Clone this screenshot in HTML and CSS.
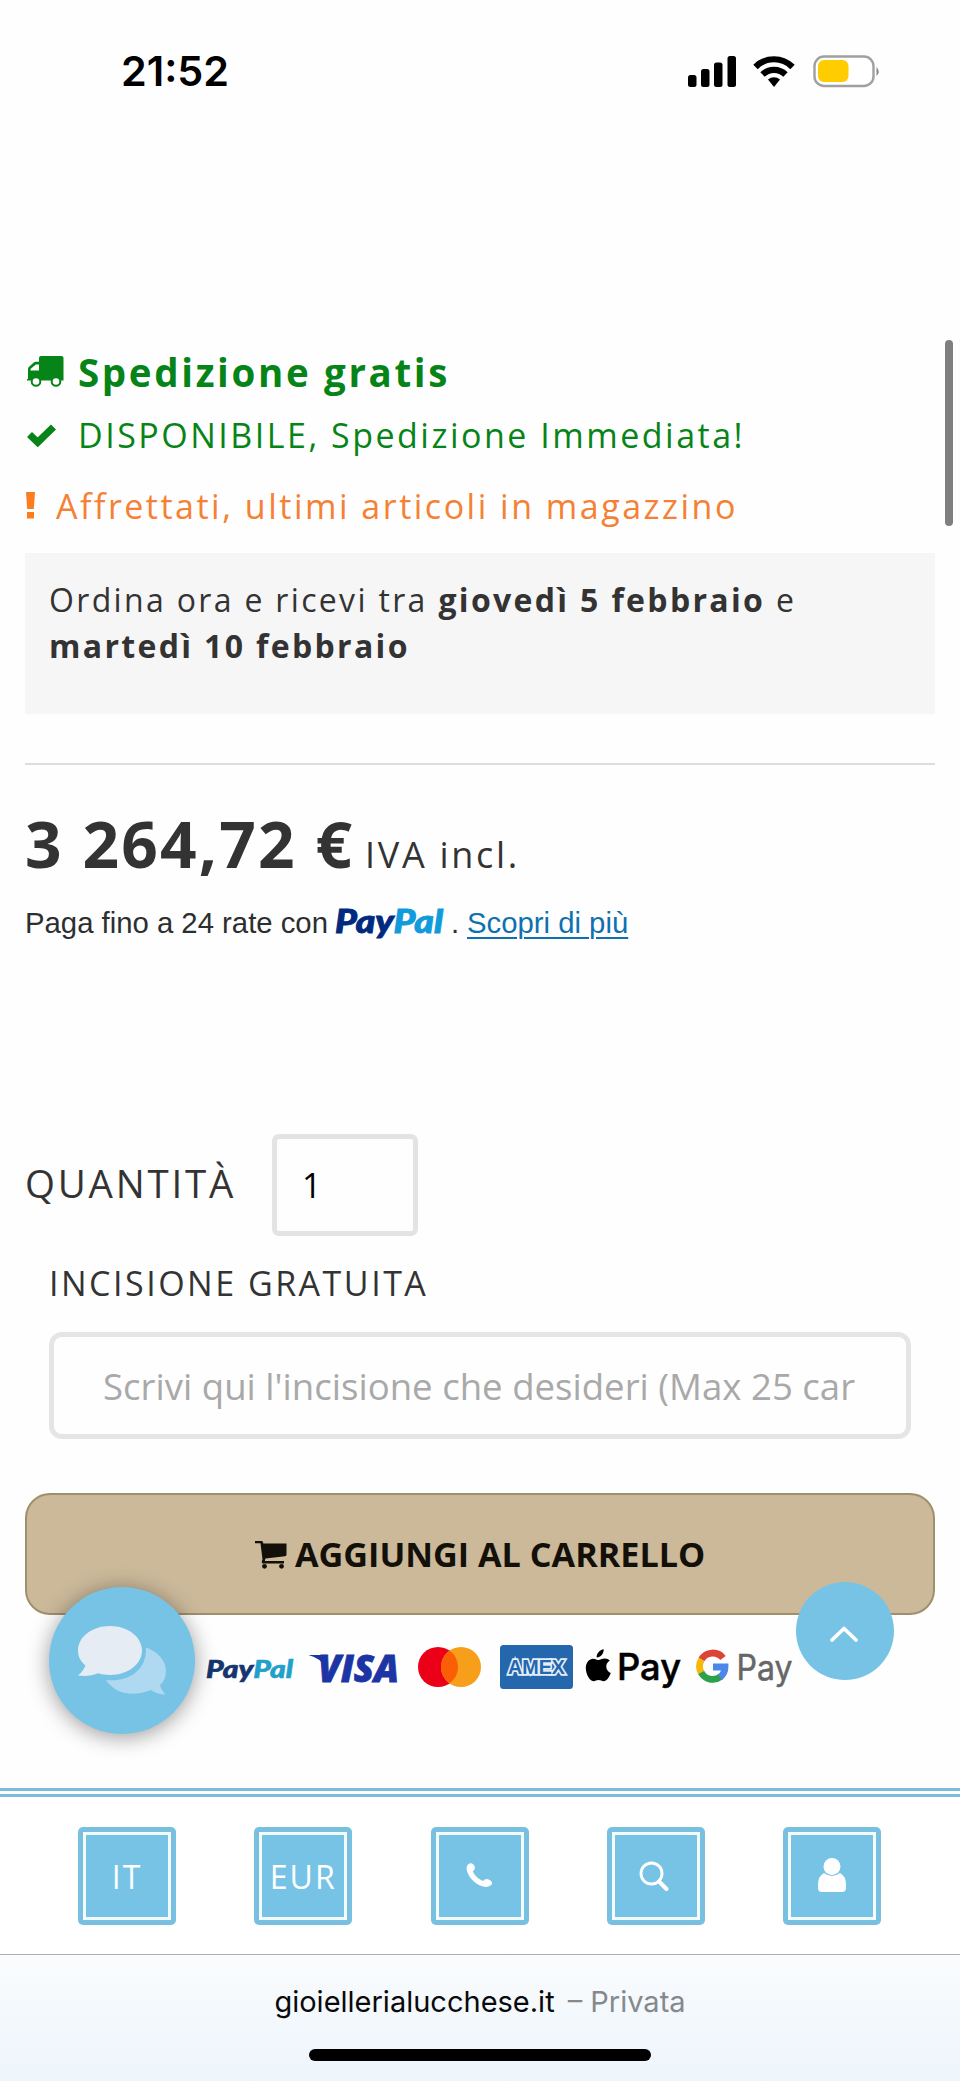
FILE: index.html
```html
<!DOCTYPE html>
<html lang="it">
<head>
<meta charset="utf-8">
<title>Gioielleria Lucchese</title>
<link rel="stylesheet" href="styles.css">
</head>
<body>
<div class="screen">
  <header class="status">
    <span class="clock">21:52</span>
    <svg class="status-icons" width="194" height="34" viewBox="0 0 194 34">
      <g fill="#000">
        <rect x="1" y="21" width="8.500" height="12" rx="2.500"/>
        <rect x="14" y="15" width="8.500" height="18" rx="2.500"/>
        <rect x="27" y="8.500" width="8.500" height="24.500" rx="2.500"/>
        <rect x="40.500" y="2" width="8.500" height="31" rx="2.500"/>
        <path d="M87 33l-6-7.500a9.500 9.500 0 0 1 12 0z"/>
      </g>
      <g fill="none" stroke="#000" stroke-width="6.200">
        <path d="M68.500 13a26 26 0 0 1 37 0"/>
        <path d="M75.500 20.500a16.500 16.500 0 0 1 23 0"/>
      </g>
      <rect x="127.500" y="2.500" width="59" height="29.500" rx="9.500" fill="#fff" stroke="#a0a0a0" stroke-width="2.400"/>
      <rect x="131" y="6" width="30.500" height="22" rx="6" fill="#fc0"/>
      <path d="M189.500 13q4.500 4.500 0 9z" fill="#888"/>
    </svg>
  </header>

  <main class="product">
    <div class="line free">
      <svg class="ico-truck" width="38" height="32" viewBox="0 0 38 32">
        <path fill="#078418" fill-rule="evenodd" d="M15 1h20.500q2 0 2 2v22.500H1V24h1V14q0-1 .8-2l5-4.500q.8-.7 2-.7H13V3q0-2 2-2zM13 9.500h-3.200L4.500 14v1.500H13z"/>
        <circle cx="10" cy="26.500" r="4.300" fill="#fefefe" stroke="#078418" stroke-width="2"/>
        <circle cx="30" cy="26.500" r="4.300" fill="#fefefe" stroke="#078418" stroke-width="2"/>
      </svg>
      <span>Spedizione gratis</span>
    </div>
    <div class="line stock">
      <svg class="ico-check" width="32" height="24" viewBox="0 0 32 24"><path d="M3.500 11.500l8.200 7.800L27.500 4" fill="none" stroke="#078418" stroke-width="7.200" stroke-linejoin="miter"/></svg>
      <span>DISPONIBILE, Spedizione Immediata!</span>
    </div>
    <div class="line hurry">
      <svg class="ico-bang" width="9" height="28" viewBox="0 0 9 28"><path fill="#fb7d1d" d="M0 1h9l-1.200 17H1.200zM1 21h7v6.500H1z"/></svg>
      <span>Affrettati, ultimi articoli in magazzino</span>
    </div>

    <p class="delivery">Ordina ora e ricevi tra <b>giovedì 5 febbraio</b> e<br><b>martedì 10 febbraio</b></p>

    <hr class="rule">

    <div class="price"><strong>3 264,72 €</strong><span>IVA incl.</span></div>
    <div class="rates">
      <span class="rates-text">Paga fino a 24 rate con</span>
      <svg class="paypal" width="112" height="60" viewBox="0 -10 112 60"><text x="1" y="29.500" textLength="108" lengthAdjust="spacingAndGlyphs" class="pp"><tspan class="pp-dark">Pay</tspan><tspan class="pp-light">Pal</tspan></text></svg>
      <span class="dot">.</span>
      <a class="more">Scopri di più</a>
    </div>

    <div class="qty"><label>QUANTITÀ</label><div class="qty-box">1</div></div>
    <div class="engrave-label">INCISIONE GRATUITA</div>
    <div class="engrave-box">Scrivi qui l'incisione che desideri (Max 25 car</div>

    <div class="cart">
      <svg class="ico-cart" width="34" height="30" viewBox="0 0 34 30">
        <path fill="#13100a" d="M1 1h6.500q1.200 0 1.500 1.200L9.300 3.500H32.500V14.500q0 1.500-1.500 1.700L11.500 18.500q-.8 1.500-.5 2.500H30v2.400H8.500q-1.500-1.200 0-4L6.500 3.200H1z"/>
        <circle cx="10.500" cy="26.300" r="2.400" fill="#13100a"/><circle cx="27.500" cy="26.300" r="2.400" fill="#13100a"/>
      </svg>
      <span>AGGIUNGI AL CARRELLO</span>
    </div>

    <svg class="payments" width="600" height="60" viewBox="196 1637 600 60">
      <text x="206" y="1678" textLength="87" lengthAdjust="spacingAndGlyphs" class="pp-small"><tspan class="pps-dark">Pay</tspan><tspan class="pps-light">Pal</tspan></text>
      <text x="318" y="1682" textLength="81" lengthAdjust="spacingAndGlyphs" class="visa">VISA</text>
      <path d="M308.500 1655h13l3 12q-4-9-16-12z" fill="#1c34a4"/>
      <circle cx="438" cy="1667" r="20" fill="#eb0018"/>
      <circle cx="461" cy="1667" r="20" fill="#f79e1b"/>
      <path d="M449.500 1650.600a20 20 0 0 1 0 32.800a20 20 0 0 1 0-32.800z" fill="#fb5f05"/>
      <rect x="500" y="1645" width="73" height="44" rx="3.500" fill="#2467ac"/>
      <text x="508" y="1674" textLength="57" lengthAdjust="spacingAndGlyphs" class="amex">AMEX</text>
      <path transform="translate(585.500 1649)" d="M18.200.2c.3 4.300-3.300 8.300-7 8.200C10.800 4.600 14.200.8 18.200.2zM24.300 11.600c-5.300 3.300-4.300 10.400 1 12.400-1.600 4.300-4.200 8.200-7.200 8.200-2 0-2.700-1.100-5-1.100s-3.100 1.100-5.100 1.100C4.100 32.200.3 24.600.3 19c0-5.600 3.500-9.300 7.300-9.300 2.300 0 4.100 1.400 5.600 1.400 1.400 0 3.400-1.600 6.200-1.500 2 .1 3.700.8 4.900 2z" fill="#000"/>
      <text x="617" y="1680" textLength="64" lengthAdjust="spacingAndGlyphs" class="apay">Pay</text>
      <g fill="none" stroke-width="6.800">
        <path d="M723 1658a13 13 0 0 0-21.500 1.500" stroke="#dc4437"/>
        <path d="M701.500 1659.500a13.500 13.500 0 0 0 .2 14" stroke="#f5b80c"/>
        <path d="M701.200 1672.500a13 13 0 0 0 19.300 4.300" stroke="#2ba14b"/>
        <path d="M713 1667h12a13 13 0 0 1-5 10.200" stroke="#4c86ea"/>
      </g>
      <text x="736.500" y="1680" textLength="56" lengthAdjust="spacingAndGlyphs" class="gpay">Pay</text>
    </svg>
  </main>

  <nav class="nav">
    <div class="tile"><div class="tile-in">IT</div></div>
    <div class="tile"><div class="tile-in">EUR</div></div>
    <div class="tile"><div class="tile-in"><svg width="28" height="28" viewBox="0 0 28 28"><path fill="#fff" d="M2 2.500C4 .5 7 .8 8.500 4c1 2.500 0 4-1.700 5.200 1.700 4.300 5.500 8 10.500 9.800 1.300-2 3.500-2.800 6-1.200 3.500 2 3.500 4.200 1.200 5.800-2.500 1.700-6.500 1.800-10.500 0C7.500 20.500 2.500 14.500 1 9 .2 6 .5 4 2 2.500z"/></svg></div></div>
    <div class="tile"><div class="tile-in"><svg class="ico-search" width="32" height="32" viewBox="0 0 32 32"><circle cx="13.500" cy="13.500" r="10.500" fill="none" stroke="#fff" stroke-width="2.900"/><path d="M21 21.500l7.500 7.500" stroke="#fff" stroke-width="4" stroke-linecap="round"/></svg></div></div>
    <div class="tile"><div class="tile-in"><svg class="ico-user" width="30" height="36" viewBox="0 0 30 36"><circle cx="15" cy="9.500" r="8.500" fill="#fff"/><path fill="#fff" d="M7 16q8 6 16 0 6 3 6 12v3q0 4-4 4H5q-4 0-4-4v-3q0-9 6-12z"/></svg></div></div>
  </nav>

  <footer class="browser">
    <div class="url"><span class="host">gioiellerialucchese.it</span><span class="mode">– Privata</span></div>
    <div class="home"></div>
  </footer>

  <div class="scrollbar"></div>
  <div class="chat">
    <svg width="92" height="72" viewBox="0 0 92 72">
      <path fill="#afd9f1" d="M69 22.500c14 5 22 16 19.500 28-1 4-2.500 7-5.500 9.500 1 4 3 7 5.500 9.500-6 0-11-2-14.500-4.500C58 72 38 69.500 29 55c20 2.500 41-8 40-32.500z"/>
      <path fill="#e6ecf3" d="M33 1C51 1 65 12 65 25.500S51 50 33 50c-4.500 0-8-.5-12-1.700C16.500 50.500 8 51.500 1 50.500 4.500 47.500 7 44 8.500 40.500 3.500 36.500 1 31.500 1 25.500 1 12 15 1 33 1z"/>
    </svg>
  </div>
  <div class="to-top"><svg width="30" height="20" viewBox="0 0 30 20"><path d="M3 16L15 4.500 27 16" fill="none" stroke="#fff" stroke-width="3.800" stroke-linecap="round" stroke-linejoin="round"/></svg></div>
</div>
</body>
</html>
```

FILE: styles.css
```css
* { box-sizing: border-box; }
body { margin: 0; background: #fff; }
.screen {
  position: relative;
  width: 960px;
  height: 2081px;
  overflow: hidden;
  background: #fefefe;
  font-family: "Open Sans", "Noto Sans", sans-serif;
  color: #333;
  display: flex;
  flex-direction: column;
  white-space: nowrap;
}
.status {
  height: 342px;
  flex: none;
  display: flex;
  align-items: flex-start;
  justify-content: space-between;
  padding: 54px 79px 0 121px;
}
.clock { font: 600 41.3px/35px Inter, sans-serif; color: #000; }
.product { height: 1446px; flex: none; padding: 0 25px; display: flex; flex-direction: column; }
.line { display: flex; align-items: center; flex: none; }
.free { height: 60px; font-size: 38.5px; font-weight: 700; color: #078418; letter-spacing: 2.65px; }
.ico-truck { margin: 0 14px 2px 1px; }
.stock { height: 65px; font-size: 34px; color: #078418; letter-spacing: 2.5px; }
.ico-check { margin: 0 20px 0 1px; }
.hurry { height: 77px; font-size: 34px; color: #f58134; letter-spacing: 2.5px; }
.ico-bang { margin: 0 21px 2px 1px; }
.delivery {
  margin: 9px 0 0;
  height: 161px;
  flex: none;
  padding: 24px 24px 0;
  background: #f6f6f6;
  font-size: 32px;
  line-height: 46px;
  letter-spacing: 2.33px;
}
.rule { width: 100%; height: 2px; flex: none; margin: 49px 0 28px; border: 0; background: #ddd; }
.price { height: 100px; flex: none; display: flex; align-items: baseline; line-height: 102px; }
.price strong { font-size: 64px; letter-spacing: 2.15px; width: 340px; }
.price span { font-size: 36px; letter-spacing: 2.7px; }
.rates {
  height: 60px;
  flex: none;
  display: flex;
  align-items: center;
  font-family: "Liberation Sans", Arial, sans-serif;
  font-size: 29.3px;
  color: #2c2e2f;
  padding-bottom: 1px;
}
.rates-text { width: 309px; }
.paypal { flex: none; }
.pp { font: italic 900 33px Lato, sans-serif; }
.pp-dark { fill: #002a80; stroke: #002a80; stroke-width: .9px; }
.pp-light { fill: #109bdc; stroke: #109bdc; stroke-width: .9px; }
.dot { width: 16px; margin-left: 5px; }
.more { color: #0f70b0; text-decoration: underline; text-decoration-thickness: 2px; text-underline-offset: 4px; }
.qty { margin-top: 181px; height: 102px; flex: none; display: flex; align-items: center; }
.qty label { width: 247px; padding-bottom: 4px; font-size: 38.5px; letter-spacing: 2.8px; }
.qty-box {
  width: 146px;
  height: 102px;
  border: 5px solid #e3e3e3;
  border-radius: 7px;
  padding: 0 25px 1px;
  display: flex;
  align-items: center;
  font-size: 34px;
  color: #000;
}
.engrave-label { height: 93px; flex: none; padding-left: 24px; line-height: 94px; font-size: 34px; letter-spacing: 2.5px; }
.engrave-box {
  margin: 3px 24px 0;
  height: 107px;
  flex: none;
  border: 5px solid #e5e5e5;
  border-radius: 13px;
  padding: 1px 0 0 49px;
  display: flex;
  align-items: center;
  font-size: 36.6px;
  color: #a9a9a9;
}
.cart {
  margin-top: 54px;
  height: 122px;
  flex: none;
  border: 2px solid #a08f6c;
  border-radius: 25px;
  background: #cbb99a;
  display: flex;
  align-items: center;
  padding: 0 0 2px 227px;
  font-size: 34.2px;
  font-weight: 700;
  color: #13100a;
}
.ico-cart { margin: 3px 7px 0 0; }
.payments { margin: 22px 0 0 171px; flex: none; }
.pp-small { font: italic 900 25.5px Lato, sans-serif; }
.pps-dark { fill: #15356f; stroke: #15356f; stroke-width: .6px; }
.pps-light { fill: #239fcb; stroke: #239fcb; stroke-width: .6px; }
.visa { font: italic 800 37px "Open Sans", sans-serif; fill: #1c34a4; stroke: #1c34a4; stroke-width: .8px; }
.amex { font: 700 21px "Liberation Sans", sans-serif; fill: #2467ac; stroke: #e3eefa; stroke-width: 3.6px; paint-order: stroke; }
.apay { font: 500 37px Inter, sans-serif; fill: #000; stroke: #000; stroke-width: .5px; }
.gpay { font: 400 35px Inter, sans-serif; fill: #666; stroke: #666; stroke-width: .5px; }
.nav {
  height: 167px;
  flex: none;
  border-top: 9px double #7cbbdb;
  border-bottom: 1px solid #a9b0b4;
  background: #fff;
  display: flex;
  justify-content: space-between;
  padding: 30px 79px 0 78px;
}
.tile { width: 98px; height: 98px; padding: 5px; background: #79c0e0; border-radius: 5px; }
.tile-in {
  width: 88px;
  height: 88px;
  border: 3px solid #f4fbff;
  background: #76c3e6;
  display: flex;
  align-items: center;
  justify-content: center;
  color: #fff;
  font-size: 32px;
  letter-spacing: 2px;
}
.ico-user { margin-bottom: 2px; }
.ico-search { margin: 0 3px 0 0; }
.browser {
  height: 126px;
  flex: none;
  background: linear-gradient(#fafcfd, #edf5fc);
  display: flex;
  flex-direction: column;
  align-items: center;
  justify-content: space-between;
  padding: 25px 0 20px;
}
.url { display: flex; font: 400 29px/44px Inter, sans-serif; color: #0a0a0c; }
.host { margin-right: 13px; }
.mode { color: #85898e; }
.home { width: 342px; height: 12px; border-radius: 6px; background: #000; }
.scrollbar { position: absolute; left: 945px; top: 340px; width: 8px; height: 186px; border-radius: 4px; background: #7f7f7f; }
.chat {
  position: absolute;
  left: 49px;
  top: 1587px;
  width: 146px;
  height: 147px;
  border-radius: 50%;
  background: #76c3e6;
  box-shadow: 0 3px 22px rgba(0, 0, 0, .4);
  padding: 38px 0 0 28px;
}
.to-top {
  position: absolute;
  left: 796px;
  top: 1582px;
  width: 98px;
  height: 98px;
  border-radius: 50%;
  background: #76c3e6;
  display: flex;
  align-items: center;
  justify-content: center;
  padding: 5px 2px 0 0;
}
```
